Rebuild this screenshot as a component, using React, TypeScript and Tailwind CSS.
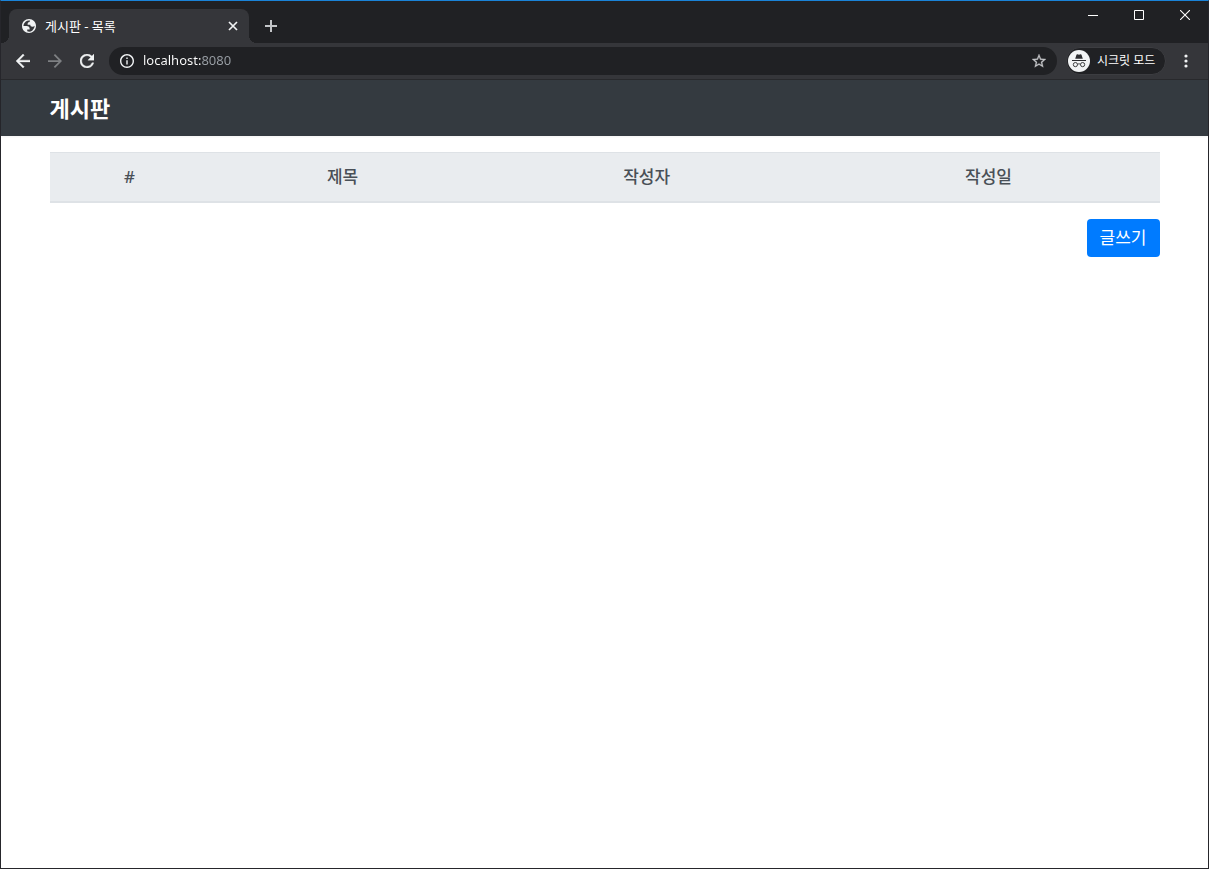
import React from "react";

const columns = [
  { label: "#", width: "w-[14.4%]" },
  { label: "제목", width: "w-[24%]" },
  { label: "작성자", width: "w-[30.8%]" },
  { label: "작성일", width: "w-[30.8%]" },
];

function GlobeIcon() {
  return (
    <svg viewBox="2 2 20 20" className="size-[14px]" fill="#f1f3f4" fillRule="evenodd" aria-hidden="true">
      <path d="M12 2C6.48 2 2 6.48 2 12s4.48 10 10 10 10-4.48 10-10S17.52 2 12 2zM4 12h4.4c3.407.022 4.922 1.73 4.543 5.127H9.488v2.47a8.004 8.004 0 0 0 10.498-8.083C19.327 12.504 18.332 13 17 13c-2.137 0-3.206-.916-3.206-2.75h-3.748c-.274-2.728.683-4.092 2.87-4.092 0-.975.327-1.597.811-1.97A8.004 8.004 0 0 0 4 12z" />
    </svg>
  );
}

function IncognitoIcon() {
  return (
    <svg viewBox="0 0 22 22" className="size-[22px]" aria-hidden="true">
      <circle cx="11" cy="11" r="11" fill="#f1f3f4" />
      <path d="M7.2 8.8 8.4 4.9c.2-.6.6-.8 1.1-.6l1.5.4 1.5-.4c.5-.2.9 0 1.1.6l1.2 3.9z" fill="#2b2c2f" />
      <path d="M4 10.5h14" stroke="#2b2c2f" strokeWidth="1" />
      <g fill="none" stroke="#2b2c2f" strokeWidth="0.9">
        <circle cx="7.4" cy="14.6" r="2.1" />
        <circle cx="14.6" cy="14.6" r="2.1" />
        <path d="M9.5 14.3c1-.6 2-.6 3 0" />
      </g>
    </svg>
  );
}

function TabStrip() {
  return (
    <div className="flex h-[42px] items-start justify-between bg-[#202124]">
      <div className="flex items-center self-end pl-2">
        <div className="relative flex h-[34px] w-[240px] items-center rounded-t-lg bg-[#35363a] pr-2 pl-[13px]">
          <span className="absolute bottom-0 -left-2 size-2 bg-[radial-gradient(circle_at_0_0,#202124_8px,#35363a_8px)]" />
          <span className="absolute -right-2 bottom-0 size-2 bg-[radial-gradient(circle_at_100%_0,#202124_8px,#35363a_8px)]" />
          <GlobeIcon />
          <span className="ml-[9px] flex-1 text-[13px] leading-4 text-white">게시판 - 목록</span>
          <button type="button" aria-label="탭 닫기" className="flex size-4 items-center justify-center">
            <svg viewBox="0 0 10 10" className="size-[10px]" stroke="#f1f3f4" strokeWidth="1.7" aria-hidden="true">
              <path d="M1 1l8 8M9 1l-8 8" />
            </svg>
          </button>
        </div>
        <button type="button" aria-label="새 탭" className="ml-2 flex size-7 items-center justify-center">
          <svg viewBox="0 0 12 12" className="size-3" stroke="#c3c5c8" strokeWidth="2" aria-hidden="true">
            <path d="M6 0v12M0 6h12" />
          </svg>
        </button>
      </div>
      <div className="flex">
        <button type="button" aria-label="최소화" className="flex h-7 w-[46px] items-center justify-center">
          <svg viewBox="0 0 10 10" className="size-[10px]" aria-hidden="true">
            <path d="M0 5h10v1H0z" fill="#fff" />
          </svg>
        </button>
        <button type="button" aria-label="최대화" className="flex h-7 w-[46px] items-center justify-center">
          <svg viewBox="0 0 10 10" className="size-[10px]" fill="none" stroke="#fff" aria-hidden="true">
            <path d="M.5.5h9v9h-9z" />
          </svg>
        </button>
        <button type="button" aria-label="닫기" className="flex h-7 w-[46px] items-center justify-center">
          <svg viewBox="0 0 10 10" className="size-[10px]" stroke="#fff" strokeWidth="1.1" aria-hidden="true">
            <path d="M0 0l10 10M10 0L0 10" />
          </svg>
        </button>
      </div>
    </div>
  );
}

function Toolbar() {
  return (
    <div className="flex h-[37px] items-center border-b border-[#28292c] bg-[#35363a] pr-[10px] pl-[6px]">
      <button type="button" aria-label="뒤로" className="flex w-8 justify-center">
        <svg viewBox="4 4 16 16" className="size-[14px]" fill="#f1f3f4" stroke="#f1f3f4" strokeWidth=".4" aria-hidden="true">
          <path d="M20 11H7.83l5.59-5.59L12 4l-8 8 8 8 1.41-1.41L7.83 13H20v-2z" />
        </svg>
      </button>
      <button type="button" aria-label="앞으로" className="flex w-8 justify-center">
        <svg viewBox="4 4 16 16" className="size-[14px]" fill="#7e8083" aria-hidden="true">
          <path d="M12 4l-1.41 1.41L16.17 11H4v2h12.17l-5.58 5.59L12 20l8-8z" />
        </svg>
      </button>
      <button type="button" aria-label="새로고침" className="flex w-8 justify-center">
        <svg viewBox="4 4 16 16" className="size-[14px]" fill="#f1f3f4" stroke="#f1f3f4" strokeWidth=".4" aria-hidden="true">
          <path d="M17.65 6.35A7.958 7.958 0 0 0 12 4c-4.42 0-7.99 3.58-7.99 8s3.57 8 7.99 8c3.73 0 6.84-2.55 7.73-6h-2.08A5.99 5.99 0 0 1 12 18c-3.31 0-6-2.69-6-6s2.69-6 6-6c1.66 0 3.14.69 4.22 1.78L13 11h7V4l-2.35 2.35z" />
        </svg>
      </button>
      <div className="ml-[6px] flex h-7 flex-1 items-center rounded-full bg-[#202124] px-[11px]">
        <svg viewBox="2 2 20 20" className="size-[14px]" fill="#f1f3f4" aria-hidden="true">
          <path d="M11 7h2v2h-2zm0 4h2v6h-2zm1-9C6.48 2 2 6.48 2 12s4.48 10 10 10 10-4.48 10-10S17.52 2 12 2zm0 18c-4.41 0-8-3.59-8-8s3.59-8 8-8 8 3.59 8 8-3.59 8-8 8z" />
        </svg>
        <input
          type="text"
          aria-label="주소창"
          defaultValue="localhost:8080"
          className="ml-[9px] min-w-0 flex-1 bg-[linear-gradient(90deg,#fff_58px,#9aa0a6_58px)] bg-clip-text text-[13px] text-transparent caret-white outline-none"
        />
        <button type="button" aria-label="북마크 추가">
          <svg viewBox="2 2 20 20" className="size-[14px]" fill="#c3c5c8" stroke="#c3c5c8" strokeWidth=".4" aria-hidden="true">
            <path d="M22 9.24l-7.19-.62L12 2 9.19 8.63 2 9.24l5.46 4.73L5.82 21 12 17.27 18.18 21l-1.63-7.03L22 9.24zM12 15.4l-3.76 2.27 1-4.28-3.32-2.88 4.38-.38L12 6.1l1.71 4.04 4.38.38-3.32 2.88 1 4.28L12 15.4z" />
          </svg>
        </button>
      </div>
      <button
        type="button"
        className="ml-[9px] flex h-7 w-[100px] items-center gap-[7px] rounded-full border border-[#3c3d41] bg-[#202124] px-px text-xs whitespace-nowrap text-white"
      >
        <IncognitoIcon />
        시크릿 모드
      </button>
      <button type="button" aria-label="메뉴" className="ml-2 flex w-6 justify-center">
        <svg viewBox="0 0 4 14" className="h-[14px] w-1" fill="#f1f3f4" aria-hidden="true">
          <circle cx="2" cy="2" r="1.6" />
          <circle cx="2" cy="7" r="1.6" />
          <circle cx="2" cy="12" r="1.6" />
        </svg>
      </button>
    </div>
  );
}

export default function App() {
  return (
    <div className="flex min-h-screen flex-col border border-[#26262b] border-t-[#1a83d8] bg-white font-['Noto_Sans','Noto_Sans_CJK_KR',sans-serif]">
      <TabStrip />
      <Toolbar />
      <header className="bg-[#343a40] shadow-xs">
        <nav className="mx-auto flex h-14 max-w-[1140px] items-center px-[15px]">
          <a href="/" className="text-[22px] leading-8 font-bold text-white">
            게시판
          </a>
        </nav>
      </header>
      <main className="mx-auto w-full max-w-[1140px] px-[15px] pt-4">
        <table className="w-full table-fixed border-collapse text-[17px] leading-6 text-[#495057]">
          <thead className="bg-[#e9ecef]">
            <tr>
              {columns.map((column) => (
                <th
                  key={column.label}
                  scope="col"
                  className={`${column.width} border-t border-b-2 border-[#dee2e6] p-3 text-center font-medium`}
                >
                  {column.label}
                </th>
              ))}
            </tr>
          </thead>
          <tbody />
        </table>
        <div className="mt-4 flex justify-end">
          <a
            href="/board/write"
            className="rounded-sm bg-[#007bff] px-[13px] py-[7px] text-[17px] leading-6 text-white"
          >
            글쓰기
          </a>
        </div>
      </main>
    </div>
  );
}
